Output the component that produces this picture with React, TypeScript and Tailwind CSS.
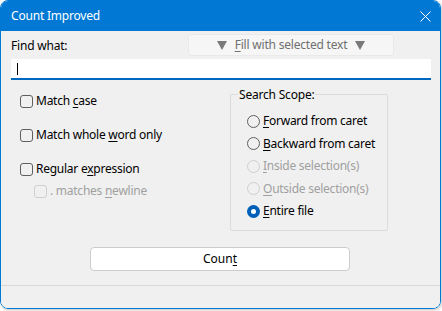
import React from "react";

const font = { fontFamily: '"Noto Sans", "Open Sans", sans-serif' };

function CheckBox({ label, disabled }: { label: [string, string, string]; disabled?: boolean }) {
  return (
    <div className={`flex items-center gap-[3px] ${disabled ? "text-[#a0a0a0]" : "text-black"}`}>
      <span
        className={`h-[13px] w-[13px] rounded-[3px] border bg-transparent ${
          disabled ? "border-[#cfcfcf]" : "border-[#5f5f5f]"
        }`}
      />
      <span className="text-[12px] leading-[16px] tracking-[-0.25px]">
        {label[0]}
        <span className="underline underline-offset-2">{label[1]}</span>
        {label[2]}
      </span>
    </div>
  );
}

function Radio({ label, checked, disabled }: { label: [string, string]; checked?: boolean; disabled?: boolean }) {
  return (
    <div className={`flex h-[22.5px] items-center gap-[3px] ${disabled ? "text-[#a0a0a0]" : "text-black"}`}>
      {checked ? (
        <span className="flex h-[13px] w-[13px] items-center justify-center rounded-full bg-[#005fb8]">
          <span className="h-[5px] w-[5px] rounded-full bg-white" />
        </span>
      ) : (
        <span
          className={`h-[13px] w-[13px] rounded-full border ${disabled ? "border-[#cfcfcf]" : "border-[#5f5f5f]"}`}
        />
      )}
      <span className="text-[12px] leading-[16px] tracking-[-0.25px]">
        <span className="underline underline-offset-2">{label[0]}</span>
        {label[1]}
      </span>
    </div>
  );
}

function Tri() {
  return (
    <svg width="10" height="9" viewBox="0 0 10 9">
      <path d="M0 0 H10 L5 9 Z" fill="#7a7a7a" />
    </svg>
  );
}

export default function App() {
  return (
    <div className="h-[311px] w-[442px] bg-white" style={font}>
      <div className="flex h-[309px] w-[441px] flex-col overflow-hidden rounded-[8px] border border-[#0078d4] shadow-[1px_1px_3px_rgba(0,0,0,0.25)]">
        <div className="flex h-[30px] shrink-0 items-center justify-between bg-[#0078d4] pl-[10px] pr-[10px]">
          <span className="text-[12px] tracking-[-0.2px] text-white">Count Improved</span>
          <svg width="11" height="11" viewBox="0 0 11 11" className="mr-[-1px]">
            <path d="M0.5 0.5 L10.5 10.5 M10.5 0.5 L0.5 10.5" stroke="white" strokeWidth="1" />
          </svg>
        </div>
        <div className="flex flex-1 flex-col bg-[#f0f0f0]">
          <div className="flex h-[25px] items-end pl-[10px] pt-[3px]">
            <span className="mb-[2px] w-[177px] text-[12px] leading-[16px] tracking-[-0.2px] text-black">
              Find what:
            </span>
            <button
              type="button"
              className="flex h-[22px] w-[206px] items-center justify-center gap-[8px] self-start rounded-[3px] border border-[#e9e9e9] bg-[#f6f6f6] text-[12px] tracking-[-0.2px] text-[#707070]"
            >
              <Tri />
              <span>
                <span className="underline underline-offset-2">F</span>ill with selected text
              </span>
              <Tri />
            </button>
          </div>
          <div className="ml-[10px] mt-[3px] flex h-[21px] w-[420px] items-center border-b-2 border-[#0067c0] bg-white pl-[6px]">
            <span className="h-[12px] w-[1px] bg-black" />
          </div>
          <div className="flex">
            <div className="flex w-[229px] flex-col pl-[19px] pt-[13px]">
              <div className="flex h-[34px] flex-col justify-start">
                <CheckBox label={["Match ", "c", "ase"]} />
              </div>
              <div className="flex h-[34px] flex-col justify-start">
                <CheckBox label={["Match whole ", "w", "ord only"]} />
              </div>
              <CheckBox label={["Regular e", "x", "pression"]} />
              <div className="ml-[14px] mt-[6px]">
                <CheckBox label={[". matches ", "n", "ewline"]} disabled />
              </div>
            </div>
            <div className="mt-[14px] h-[137px] w-[158px] rounded-[2px] border border-[#dcdcdc]">
              <div className="-mt-[8px] ml-[7px] w-fit bg-[#f0f0f0] px-[1px] text-[12px] leading-[16px] tracking-[-0.2px] text-black">
                Search Scope:
              </div>
              <div className="ml-[16px] mt-[7px] flex flex-col">
                <Radio label={["F", "orward from caret"]} />
                <Radio label={["B", "ackward from caret"]} />
                <Radio label={["I", "nside selection(s)"]} disabled />
                <Radio label={["O", "utside selection(s)"]} disabled />
                <Radio label={["E", "ntire file"]} checked />
              </div>
            </div>
          </div>
          <div className="mt-[16px] flex justify-center pr-[1px]">
            <button
              type="button"
              className="h-[24px] w-[260px] rounded-[4px] border border-[#cccccc] bg-white text-[12px] text-black"
            >
              Coun<span className="underline underline-offset-2">t</span>
            </button>
          </div>
          <div className="mt-[14px] h-[1px] bg-[#d9d9d9]" />
        </div>
      </div>
    </div>
  );
}
